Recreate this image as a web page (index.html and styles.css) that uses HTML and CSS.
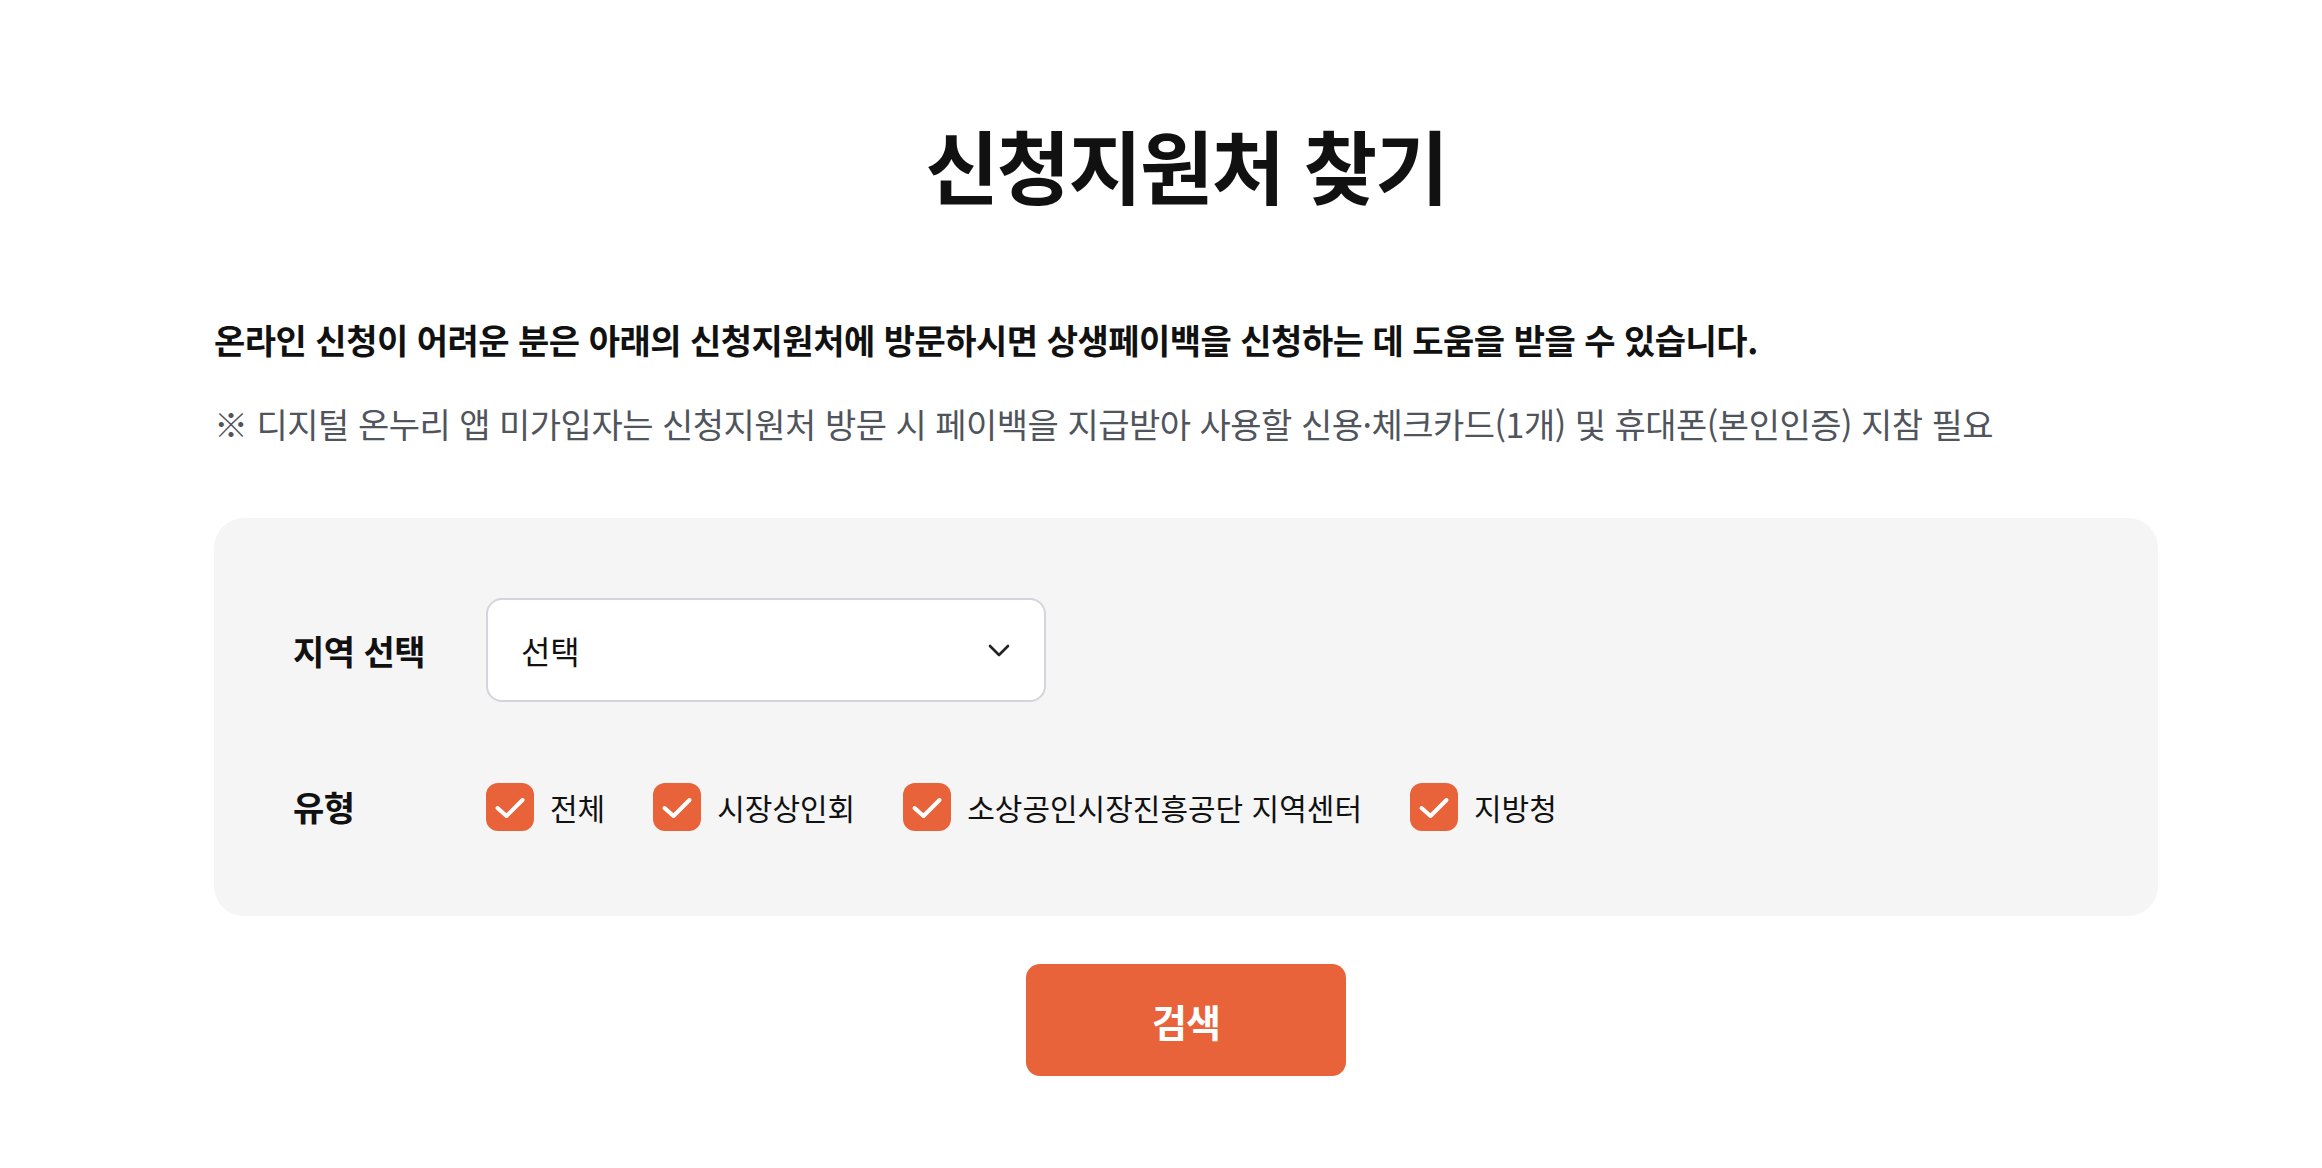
FILE: index.html
```html
<!DOCTYPE html>
<html lang="ko">
<head>
<meta charset="utf-8">
<title>신청지원처 찾기</title>
<link rel="stylesheet" href="styles.css">
</head>
<body>
<main class="page">
  <h1 class="title">신청지원처 찾기</h1>
  <p class="lead">온라인 신청이 어려운 분은 아래의 신청지원처에 방문하시면 상생페이백을 신청하는 데 도움을 받을 수 있습니다.</p>
  <p class="note">※ 디지털 온누리 앱 미가입자는 신청지원처 방문 시 페이백을 지급받아 사용할 신용·체크카드(1개) 및 휴대폰(본인인증) 지참 필요</p>

  <section class="panel">
    <div class="row">
      <span class="label">지역 선택</span>
      <div class="select">
        <span class="select-text">선택</span>
        <svg class="chevron" width="22" height="13" viewBox="0 0 22 13" aria-hidden="true"><path d="M2 2 L11 11 L20 2" fill="none" stroke="#222" stroke-width="2.6" stroke-linecap="round" stroke-linejoin="round"/></svg>
      </div>
    </div>
    <div class="row row-checks">
      <span class="label">유형</span>
      <div class="checks">
        <label class="check"><span class="box"><svg width="48" height="48" viewBox="0 0 48 48" aria-hidden="true"><path d="M11.5 25 L20.5 33 L36.5 17" fill="none" stroke="#fff" stroke-width="4" stroke-linecap="round" stroke-linejoin="round"/></svg></span><span class="check-text">전체</span></label>
        <label class="check"><span class="box"><svg width="48" height="48" viewBox="0 0 48 48" aria-hidden="true"><path d="M11.5 25 L20.5 33 L36.5 17" fill="none" stroke="#fff" stroke-width="4" stroke-linecap="round" stroke-linejoin="round"/></svg></span><span class="check-text">시장상인회</span></label>
        <label class="check"><span class="box"><svg width="48" height="48" viewBox="0 0 48 48" aria-hidden="true"><path d="M11.5 25 L20.5 33 L36.5 17" fill="none" stroke="#fff" stroke-width="4" stroke-linecap="round" stroke-linejoin="round"/></svg></span><span class="check-text">소상공인시장진흥공단 지역센터</span></label>
        <label class="check"><span class="box"><svg width="48" height="48" viewBox="0 0 48 48" aria-hidden="true"><path d="M11.5 25 L20.5 33 L36.5 17" fill="none" stroke="#fff" stroke-width="4" stroke-linecap="round" stroke-linejoin="round"/></svg></span><span class="check-text">지방청</span></label>
      </div>
    </div>
  </section>

  <div class="actions">
    <button class="btn" type="button">검색</button>
  </div>
</main>
</body>
</html>
```

FILE: styles.css
```css
* { box-sizing: border-box; }
html, body { margin: 0; padding: 0; background: #fff; }
body {
  font-family: "Noto Sans CJK KR", "Noto Sans", sans-serif;
  color: #111;
}
.page {
  width: 1944px;
  margin-left: 214px;
  padding-top: 108px;
}
.title {
  margin: 0;
  text-align: center;
  font-size: 80px;
  line-height: 110px;
  font-weight: 700;
  letter-spacing: -2px;
  color: #111;
}
.lead {
  margin: 100px 0 0;
  font-size: 34px;
  line-height: 44px;
  font-weight: 700;
  letter-spacing: -0.5px;
  color: #111;
}
.note {
  margin: 40px 0 0;
  font-size: 34px;
  line-height: 44px;
  font-weight: 400;
  letter-spacing: -0.5px;
  color: #50545c;
}
.panel {
  margin-top: 72px;
  background: #f5f5f5;
  border-radius: 30px;
  padding: 80px 80px 85px 79px;
  display: flex;
  flex-direction: column;
  gap: 80px;
}
.row {
  display: flex;
  align-items: center;
}
.label {
  width: 193px;
  flex: none;
  font-size: 34px;
  font-weight: 700;
  letter-spacing: -0.5px;
  color: #111;
}
.select {
  width: 560px;
  height: 104px;
  background: #fff;
  border: 2px solid #d3d5da;
  border-radius: 16px;
  display: flex;
  align-items: center;
  justify-content: space-between;
  padding: 0 34px 0 33px;
}
.select-text {
  font-size: 32px;
  letter-spacing: -0.3px;
  color: #111;
}
.chevron { display: block; }
.checks {
  display: flex;
  align-items: center;
  gap: 48px;
}
.check {
  display: flex;
  align-items: center;
  gap: 16px;
}
.box {
  width: 48px;
  height: 48px;
  border-radius: 12px;
  background: #e8633a;
  display: flex;
  align-items: center;
  justify-content: center;
}
.box svg { display: block; }
.check-text {
  font-size: 30px;
  letter-spacing: 0;
  color: #111;
}
.actions {
  display: flex;
  justify-content: center;
  margin-top: 48px;
}
.btn {
  width: 320px;
  height: 112px;
  border: 0;
  border-radius: 14px;
  background: #e8633a;
  color: #fff;
  font-family: "Noto Sans CJK KR", "Noto Sans", sans-serif;
  font-size: 38px;
  font-weight: 700;
  letter-spacing: -1px;
}
```
